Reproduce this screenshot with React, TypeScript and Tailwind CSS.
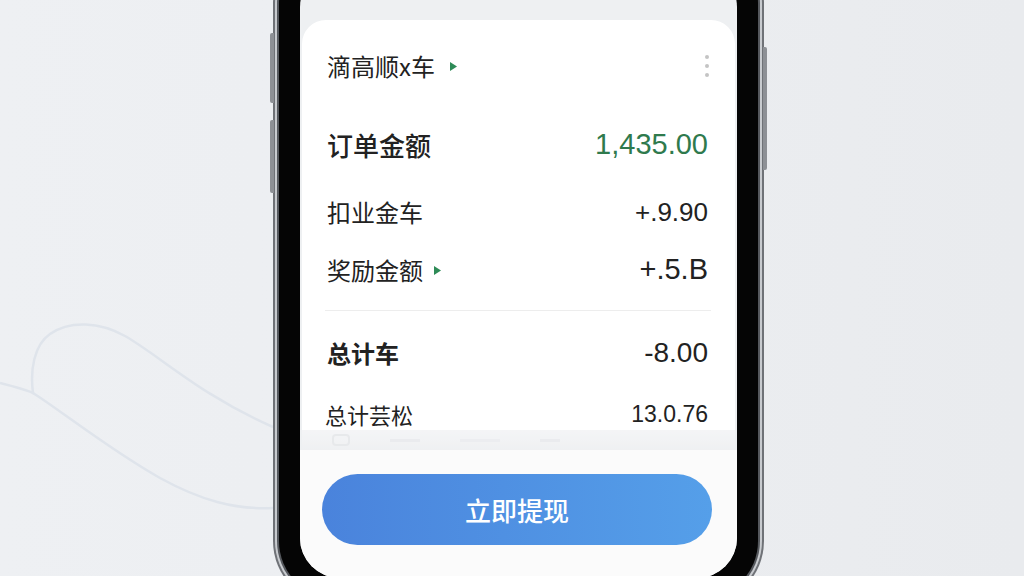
import React from "react";

const cjk = { fontFamily: '"Noto Sans CJK SC", "Noto Sans", sans-serif' };
const num = { fontFamily: '"Liberation Sans", Arial, sans-serif' };

function Tri() {
  return (
    <svg width="9" height="11" viewBox="0 0 9 11" className="shrink-0">
      <path d="M1 1 L8 5.5 L1 10 Z" fill="#2e8b57" />
    </svg>
  );
}

export default function App() {
  return (
    <div className="relative w-[1024px] h-[576px] overflow-hidden bg-gradient-to-r from-[#eef0f3] via-[#eceef1] to-[#e9ebee]">
      <svg className="absolute left-0 top-0" width="300" height="576" viewBox="0 0 300 576">
        <path
          d="M0 383 C12 386 24 389 33 393 C30 370 34 345 50 334 C70 320 100 322 125 336 C160 356 200 395 273 427"
          fill="none"
          stroke="#dfe4eb"
          strokeWidth="2.5"
        />
        <path
          d="M33 393 C60 410 110 450 160 478 C200 500 235 510 273 508"
          fill="none"
          stroke="#dfe4eb"
          strokeWidth="2.5"
        />
      </svg>

      <div className="flex pl-[273px]">
        <div className="relative -mt-[60px]">
          {/* side buttons */}
          <div className="absolute left-[-3px] top-[93px] w-[4px] h-[70px] rounded-l-[2px] bg-[#8d9095]" />
          <div className="absolute left-[-3px] top-[180px] w-[4px] h-[73px] rounded-l-[2px] bg-[#8d9095]" />
          <div className="absolute right-[-3px] top-[107px] w-[4px] h-[123px] rounded-r-[2px] bg-[#8d9095]" />

          <div className="rounded-[64px] bg-[#6f7277] p-[2px]">
            <div className="rounded-[62px] bg-[#c8cbcf] p-[2px]">
              <div className="rounded-[60px] bg-[#55585d] p-[2px]">
                <div className="rounded-[58px] bg-[#050505] p-[21px]">
                  <div className="w-[437px] h-[611px] rounded-[40px] overflow-hidden bg-[#eef0f2] flex flex-col">
                    <div className="h-[53px] shrink-0" />
                    {/* card */}
                    <div className="mx-[2px] h-[410px] shrink-0 rounded-t-[24px] bg-white pl-[25px] pr-[27px] flex flex-col text-[#222]">
                      <div className="mt-[28px] h-[36px] flex items-center justify-between">
                        <div className="flex items-center gap-[14px]">
                          <span className="text-[24px]" style={cjk}>滴高顺x车</span>
                          <Tri />
                        </div>
                        <div className="flex flex-col gap-[5px] items-center mr-[-1px]">
                          <span className="w-[4px] h-[4px] rounded-full bg-[#c4c4c4]" />
                          <span className="w-[4px] h-[4px] rounded-full bg-[#c4c4c4]" />
                          <span className="w-[4px] h-[4px] rounded-full bg-[#c4c4c4]" />
                        </div>
                      </div>

                      <div className="mt-[40px] h-[40px] flex items-center justify-between">
                        <span className="text-[26px] font-medium" style={cjk}>订单金额</span>
                        <span className="text-[29px] text-[#2f7a4d] mt-[2px]" style={num}>1,435.00</span>
                      </div>

                      <div className="mt-[30px] h-[36px] flex items-center justify-between">
                        <span className="text-[24px]" style={cjk}>扣业金车</span>
                        <span className="text-[26px]" style={num}>+.9.90</span>
                      </div>

                      <div className="mt-[22px] h-[36px] flex items-center justify-between">
                        <div className="flex items-center gap-[10px]">
                          <span className="text-[24px]" style={cjk}>奖励金额</span>
                          <Tri />
                        </div>
                        <span className="text-[29px]" style={num}>+.5.B</span>
                      </div>

                      <div className="mt-[22px] h-px bg-[#ededed] mr-[-3px] ml-[-2px]" />

                      <div className="mt-[24px] h-[36px] flex items-center justify-between">
                        <span className="text-[24px] font-semibold" style={cjk}>总计车</span>
                        <span className="text-[28px]" style={num}>-8.00</span>
                      </div>

                      <div className="mt-[27px] h-[32px] flex items-center justify-between">
                        <span className="text-[22px] -ml-[2px]" style={cjk}>总计芸松</span>
                        <span className="text-[23px]" style={num}>13.0.76</span>
                      </div>
                    </div>

                    {/* faded strip */}
                    <div className="mx-[2px] h-[20px] shrink-0 bg-gradient-to-b from-[#f9f9fa] to-[#f0f1f3] flex items-center gap-[40px] pl-[30px] opacity-60">
                      <span className="w-[18px] h-[12px] rounded-[4px] border-2 border-[#e4e5e8]" />
                      <span className="w-[30px] h-[3px] bg-[#e8e9ec]" />
                      <span className="w-[40px] h-[3px] bg-[#ececef]" />
                      <span className="w-[20px] h-[3px] bg-[#e8e9ec]" />
                    </div>

                    {/* bottom panel */}
                    <div className="flex-1 bg-[#fbfbfb] flex flex-col items-center">
                      <button
                        className="mt-[24px] w-[390px] h-[71px] rounded-full bg-gradient-to-r from-[#4a83dc] to-[#559fe9] text-white text-[26px] font-medium flex items-center justify-center ml-[-3px]"
                        style={cjk}
                      >
                        立即提现
                      </button>
                    </div>
                  </div>
                </div>
              </div>
            </div>
          </div>
        </div>
      </div>
    </div>
  );
}
